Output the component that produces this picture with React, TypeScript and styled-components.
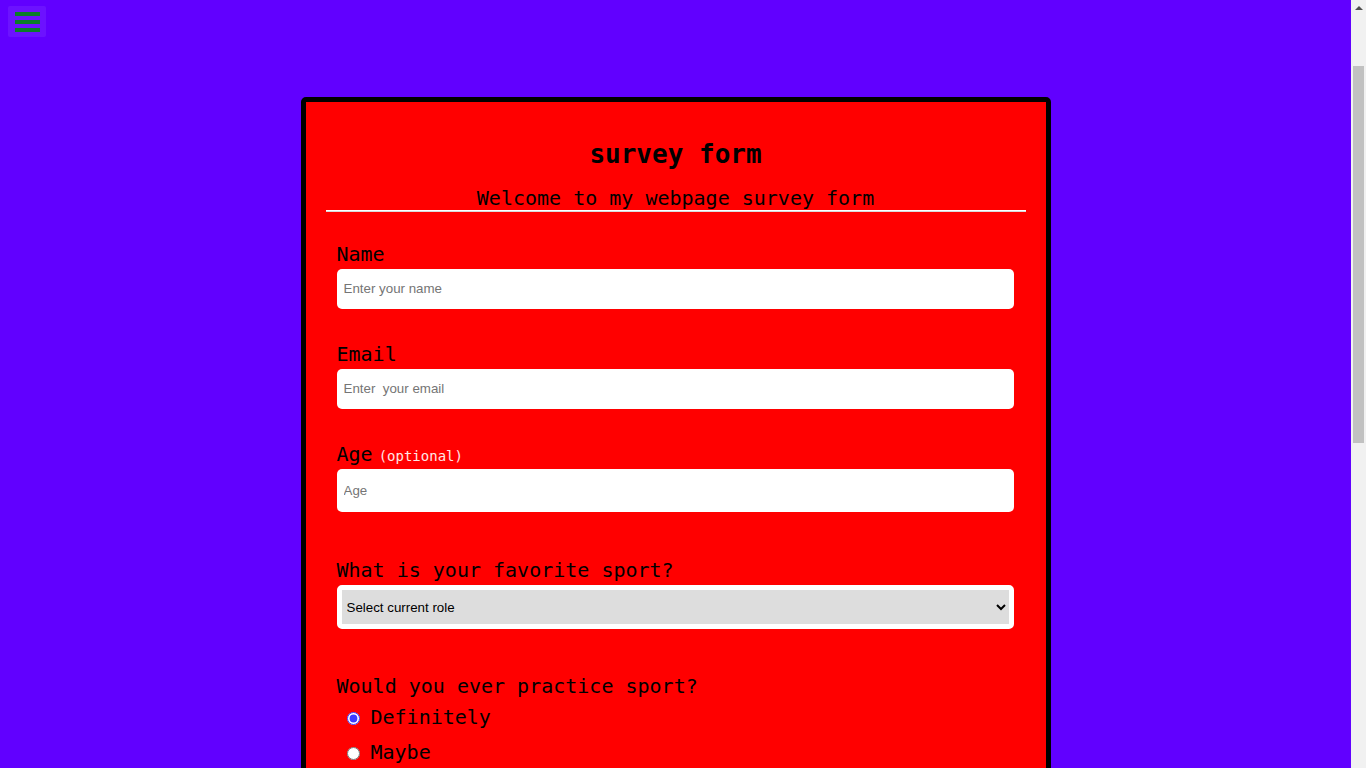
import React from "react";
import styled, { createGlobalStyle } from "styled-components";

const Global = createGlobalStyle`
  html, body { margin: 0; padding: 0; }
  body {
    background: #6100ff;
    font-family: "DejaVu Sans Mono", monospace;
    color: #000;
  }
  * { box-sizing: border-box; }
`;

const MenuButton = styled.button`
  position: fixed;
  top: 6px;
  left: 8px;
  width: 38px;
  height: 31px;
  padding: 0;
  border: none;
  border-radius: 2px;
  background: rgba(255, 255, 255, 0.07);
  display: flex;
  flex-direction: column;
  align-items: center;
  justify-content: center;
  gap: 4px;
  cursor: pointer;
`;

const Bar = styled.span`
  display: block;
  width: 25px;
  height: 4px;
  background: #0b7d2a;
`;

const ScrollTrack = styled.div`
  position: fixed;
  top: 0;
  right: 0;
  width: 15px;
  height: 100vh;
  background: #f1f1f1;
  display: flex;
  flex-direction: column;
  align-items: center;
`;

const ScrollArrow = styled.div`
  width: 0;
  height: 0;
  margin-top: 6px;
  border-left: 4px solid transparent;
  border-right: 4px solid transparent;
  border-bottom: 4px solid #505050;
`;

const ScrollThumb = styled.div`
  margin-top: 56px;
  width: 11px;
  height: 377px;
  background: #c1c1c1;
`;

const Page = styled.main`
  width: calc(100% - 15px);
  padding: 97px 0 60px;
`;

const Card = styled.div`
  width: 750px;
  margin: 0 auto;
  background: #ff0000;
  border: 5px solid #000;
  border-radius: 5px;
  padding: 37px 20px 40px;
`;

const Title = styled.h1`
  margin: 0;
  font-size: 26px;
  line-height: 30px;
  font-weight: bold;
  text-align: center;
`;

const Subtitle = styled.p`
  margin: 17px 0 0;
  font-size: 20px;
  line-height: 24px;
  text-align: center;
`;

const Rule = styled.hr`
  margin: 0;
  border: none;
  border-top: 1px solid #ffffff;
  border-bottom: 1px solid #d8d8d8;
  height: 0;
`;

const Form = styled.form`
  padding: 30px 12px 0 11px;
  display: flex;
  flex-direction: column;
`;

const Group = styled.div<{ $gap: number }>`
  display: flex;
  flex-direction: column;
  margin-bottom: ${(p) => p.$gap}px;
`;

const Label = styled.label`
  font-size: 20px;
  line-height: 24px;
  height: 24px;
  margin-bottom: 3px;
  display: flex;
  align-items: baseline;
  gap: 6px;
`;

const Hint = styled.span`
  font-size: 14px;
  line-height: 16px;
  color: #ffe6e6;
`;

const Input = styled.input<{ $h: number }>`
  width: 100%;
  height: ${(p) => p.$h}px;
  border: none;
  border-radius: 5px;
  background: #fff;
  padding: 0 7px 1px;
  font-family: "Liberation Sans", Arial, sans-serif;
  font-size: 13.33px;
  color: #000;
  outline: none;
  &::placeholder { color: #757575; }
`;

const Select = styled.select`
  width: 100%;
  height: 44px;
  border: 5px solid #fff;
  border-radius: 5px;
  background: #dddddd;
  font-family: "Liberation Sans", Arial, sans-serif;
  font-size: 13.33px;
  color: #000;
  padding: 0 1px;
  outline: none;
`;

const Question = styled.p`
  margin: 0 0 1px;
  font-size: 20px;
  line-height: 24px;
`;

const Choice = styled.label`
  display: flex;
  align-items: center;
  height: 35px;
  padding-left: 10px;
  font-size: 20px;
  gap: 11px;
  & input { margin: 4px 0 0; width: 13px; height: 13px; accent-color: #3b3bff; }
`;

const Area = styled.textarea`
  width: 100%;
  height: 120px;
  border: none;
  border-radius: 5px;
  padding: 7px;
  font-family: "Liberation Sans", Arial, sans-serif;
  font-size: 13.33px;
  resize: vertical;
`;

const Submit = styled.button`
  margin-top: 30px;
  height: 44px;
  border: none;
  border-radius: 5px;
  background: #000;
  color: #fff;
  font-family: "DejaVu Sans Mono", monospace;
  font-size: 18px;
`;

export default function App() {
  return (
    <>
      <Global />
      <MenuButton aria-label="menu">
        <Bar />
        <Bar />
        <Bar />
      </MenuButton>
      <ScrollTrack aria-hidden="true">
        <ScrollArrow />
        <ScrollThumb />
      </ScrollTrack>
      <Page>
        <Card>
          <Title>survey form</Title>
          <Subtitle>Welcome to my webpage survey form</Subtitle>
          <Rule />
          <Form onSubmit={(e) => e.preventDefault()}>
            <Group $gap={33}>
              <Label htmlFor="name">Name</Label>
              <Input id="name" $h={40} placeholder="Enter your name" />
            </Group>
            <Group $gap={33}>
              <Label htmlFor="email">Email</Label>
              <Input id="email" $h={40} placeholder="Enter  your email" />
            </Group>
            <Group $gap={46}>
              <Label htmlFor="age">
                Age<Hint>(optional)</Hint>
              </Label>
              <Input id="age" $h={43} type="number" placeholder="Age" />
            </Group>
            <Group $gap={45}>
              <Label htmlFor="sport">What is your favorite sport?</Label>
              <Select id="sport" defaultValue="">
                <option value="">Select current role</option>
                <option>Football</option>
                <option>Basketball</option>
                <option>Tennis</option>
              </Select>
            </Group>
            <Group $gap={30}>
              <Question>Would you ever practice sport?</Question>
              <Choice>
                <input type="radio" name="practice" defaultChecked />
                Definitely
              </Choice>
              <Choice>
                <input type="radio" name="practice" />
                Maybe
              </Choice>
              <Choice>
                <input type="radio" name="practice" />
                Not sure
              </Choice>
            </Group>
            <Group $gap={0}>
              <Label htmlFor="comments">Any comments or suggestions?</Label>
              <Area id="comments" placeholder="Enter your comment here..." />
            </Group>
            <Submit type="submit">Submit</Submit>
          </Form>
        </Card>
      </Page>
    </>
  );
}
